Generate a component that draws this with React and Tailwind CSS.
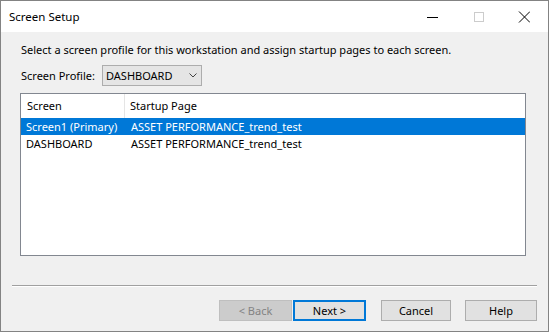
import React from "react";

const font = { fontFamily: '"Noto Sans", "Open Sans", sans-serif' };

function Btn({ children, variant, w }) {
  if (variant === "disabled") {
    return (
      <div className="w-[73px] h-[21px] flex items-center justify-center border border-[#bfbfbf] bg-[#cccccc] text-[#838383]">
        {children}
      </div>
    );
  }
  if (variant === "default") {
    return (
      <div className="w-[73px] h-[21px] flex items-center justify-center border-2 border-[#0078d7] bg-[#e1e1e1] text-black">
        {children}
      </div>
    );
  }
  return (
    <div className={"h-[21px] flex items-center justify-center border border-[#adadad] bg-[#e1e1e1] text-black " + (w === 70 ? "w-[70px]" : "w-[72px]")}>
      {children}
    </div>
  );
}

export default function App() {
  return (
    <div className="w-[552px] h-[334px] bg-white text-[11px] leading-[16px] text-black" style={font}>
      <div className="w-[549px] h-[332px] border border-[#838383] flex flex-col bg-[#f0f0f0]">
        {/* Title bar */}
        <div className="h-[31px] bg-white flex items-center shrink-0">
          <div className="pl-[8px] flex-1 text-[11.5px]">Screen Setup</div>
          <div className="flex items-center h-full pr-[1px]">
            <div className="w-[46px] h-full flex items-center justify-center">
              <svg width="12" height="12" viewBox="0 0 12 12">
                <line x1="1" y1="6.5" x2="12" y2="6.5" stroke="#000" strokeWidth="1" />
              </svg>
            </div>
            <div className="w-[46px] h-full flex items-center justify-center">
              <svg width="12" height="12" viewBox="0 0 12 12">
                <rect x="2.5" y="1.5" width="9" height="9" fill="none" stroke="#cccccc" strokeWidth="1" />
              </svg>
            </div>
            <div className="w-[46px] h-full flex items-center justify-center">
              <svg width="12" height="12" viewBox="0 0 12 12">
                <path d="M1 0.5 L12 11.5 M12 0.5 L1 11.5" stroke="#000" strokeWidth="1" />
              </svg>
            </div>
          </div>
        </div>

        {/* Body */}
        <div className="flex flex-col flex-1 px-[11px]">
          <div className="pl-[9px] mt-[10px]">
            Select a screen profile for this workstation and assign startup pages to each screen.
          </div>
          <div className="pl-[9px] mt-[7px] flex items-center h-[21px]">
            <div className="w-[81px]">Screen Profile:</div>
            <div className="w-[100px] h-[21px] border border-[#adadad] bg-[#e5e5e5] flex items-center pl-[3px] pr-[4px]">
              <span className="flex-1">DASHBOARD</span>
              <svg width="8" height="5" viewBox="0 0 8 5">
                <path d="M0.5 0.5 L4 4 L7.5 0.5" fill="none" stroke="#444" strokeWidth="1" />
              </svg>
            </div>
          </div>

          {/* List */}
          <div className="ml-[8px] mt-[7px] w-[506px] h-[163px] border border-[#828790] bg-white flex flex-col">
            <div className="h-[24px] flex shrink-0">
              <div className="w-[104px] pl-[6px] flex items-center border-r border-[#e5e5e5]">Screen</div>
              <div className="pl-[5px] flex items-center">Startup Page</div>
            </div>
            <div className="h-[17px] flex bg-[#0078d7] text-white">
              <div className="w-[105px] pl-[5px] flex items-center">Screen1 (Primary)</div>
              <div className="pl-[5px] flex items-center">ASSET PERFORMANCE_trend_test</div>
            </div>
            <div className="h-[17px] flex">
              <div className="w-[105px] pl-[5px] flex items-center">DASHBOARD</div>
              <div className="pl-[5px] flex items-center">ASSET PERFORMANCE_trend_test</div>
            </div>
          </div>

          {/* Separator */}
          <div className="mt-[29px] border-t border-[#a0a0a0] border-b border-b-white" />

          {/* Buttons */}
          <div className="mt-[13px] flex justify-end items-center">
            <Btn variant="disabled">&lt; Back</Btn>
            <div className="ml-[1px]">
              <Btn variant="default">Next &gt;</Btn>
            </div>
            <div className="ml-[15px]">
              <Btn w={70}>Cancel</Btn>
            </div>
            <div className="ml-[14px]">
              <Btn>Help</Btn>
            </div>
          </div>
        </div>
      </div>
    </div>
  );
}
